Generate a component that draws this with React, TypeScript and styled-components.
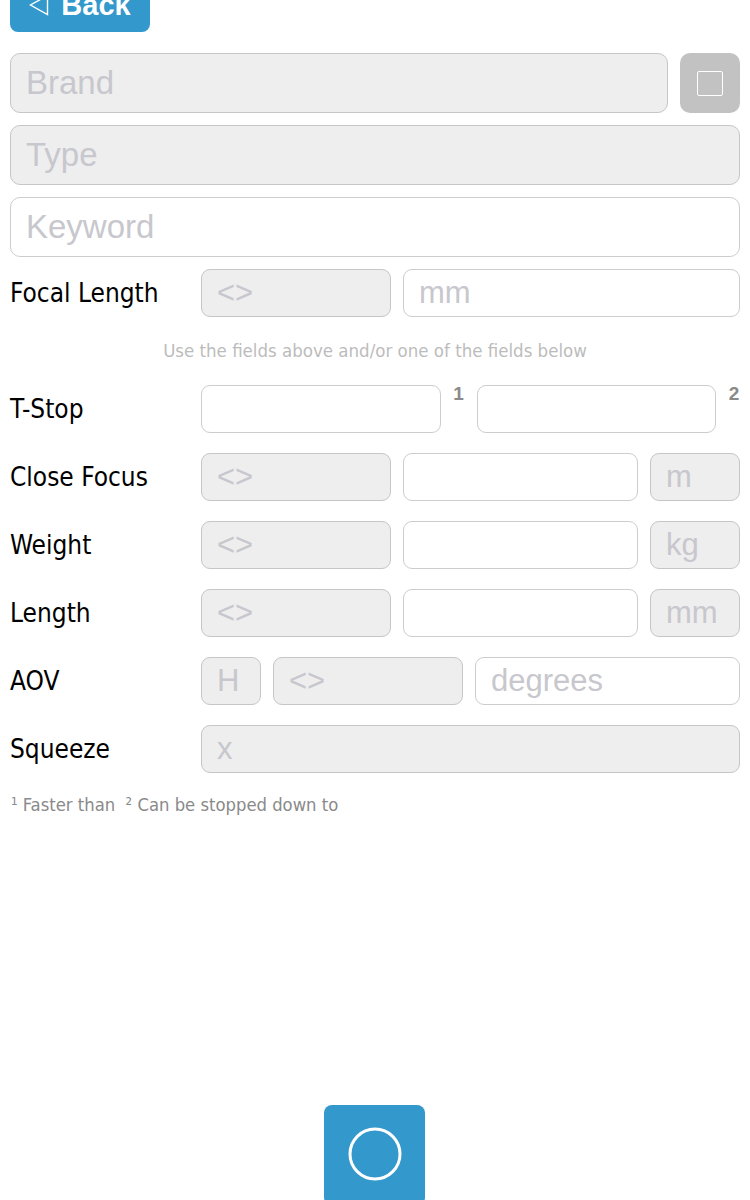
import React from "react";
import styled, { createGlobalStyle } from "styled-components";

const Global = createGlobalStyle`
  html, body { margin: 0; padding: 0; background: #ffffff; overflow: hidden; }
  body { font-family: "Liberation Sans", Arial, sans-serif; }
  * { box-sizing: border-box; }
`;

const condensed = `"Liberation Sans Narrow", "DejaVu Sans Condensed", "Roboto Condensed", sans-serif`;

const Page = styled.div`
  width: 750px;
  padding: 0 10px;
  display: flex;
  flex-direction: column;
`;

const BackButton = styled.button`
  margin-top: -22px;
  width: 140px;
  height: 54px;
  border: none;
  border-radius: 8px;
  background: #3399cc;
  color: #ffffff;
  font-family: "Liberation Sans", Arial, sans-serif;
  font-weight: bold;
  font-size: 29px;
  display: flex;
  align-items: center;
  justify-content: center;
  gap: 12px;
  padding: 0;
`;

const Stack = styled.div`
  margin-top: 21px;
  display: flex;
  flex-direction: column;
  gap: 12px;
`;

const TopRow = styled.div`
  display: flex;
  gap: 12px;
`;

const Field = styled.input<{ $gray?: boolean; $h?: number; $w?: number; $r?: number }>`
  height: ${(p) => p.$h ?? 48}px;
  ${(p) => (p.$w ? `width: ${p.$w}px; flex: none;` : `width: 0; flex: 1 1 0; min-width: 0;`)}
  border: 1px solid ${(p) => (p.$gray ? "#c6c6c6" : "#cdcdcd")};
  border-radius: ${(p) => p.$r ?? 9}px;
  background: ${(p) => (p.$gray ? "#eeeeee" : "#ffffff")};
  padding: 0 0 0 15px;
  font-family: "Liberation Sans", Arial, sans-serif;
  font-size: ${(p) => ((p.$h ?? 48) > 50 ? 33 : 31)}px;
  color: #333;
  outline: none;
  &::placeholder {
    color: #c7c7cd;
  }
`;

const SquareButton = styled.div`
  width: 60px;
  height: 60px;
  flex: none;
  border-radius: 10px;
  background: #c2c2c2;
  display: flex;
  align-items: center;
  justify-content: center;
`;

const SquareIcon = styled.div`
  width: 26px;
  height: 25px;
  border: 1.5px solid #ffffff;
  border-radius: 2px;
`;

const Form = styled.div`
  margin-top: 12px;
  display: flex;
  flex-direction: column;
`;

const Row = styled.div<{ $mt?: number }>`
  display: grid;
  grid-template-columns: 191px minmax(0, 1fr);
  align-items: center;
  margin-top: ${(p) => p.$mt ?? 20}px;
`;

const Label = styled.div`
  font-family: ${condensed};
  font-size: 26px;
  color: #000;
  line-height: 48px;
  white-space: nowrap;
`;

const Fields = styled.div`
  display: flex;
  gap: 12px;
  align-items: center;
  min-width: 0;
`;

const Sup = styled.span`
  width: 12px;
  flex: none;
  align-self: flex-start;
  font-family: "Liberation Sans", Arial, sans-serif;
  font-weight: bold;
  font-size: 19px;
  line-height: 20px;
  margin-top: -1px;
  color: #8a8a8a;
  text-align: center;
`;

const Hint = styled.div`
  margin-top: 22px;
  text-align: center;
  font-family: ${condensed};
  font-size: 18.5px;
  color: #bcbcbc;
  line-height: 24px;
`;

const Footnote = styled.div`
  margin-top: 20px;
  padding-left: 1px;
  font-family: ${condensed};
  font-size: 18.3px;
  color: #8a8a8a;
  line-height: 24px;
  white-space: pre;
`;

const BottomBar = styled.div`
  margin-top: 288px;
  display: flex;
  justify-content: center;
`;

const RoundAction = styled.button`
  margin-left: -1px;
  width: 101px;
  height: 101px;
  border: none;
  border-radius: 8px;
  background: #3399cc;
  display: flex;
  align-items: flex-start;
  justify-content: center;
  padding: 21px 0 0 0;
`;

const Triangle = () => (
  <svg width="20" height="22" viewBox="0 0 20 22">
    <path d="M18.5 1.5 L18.5 20.5 L1.5 11 Z" fill="none" stroke="#ffffff" strokeWidth="1.4" strokeLinejoin="miter" />
  </svg>
);

export default function App() {
  return (
    <>
      <Global />
      <Page>
        <BackButton>
          <Triangle />
          <span>Back</span>
        </BackButton>
        <Stack>
          <TopRow>
            <Field $gray $h={60} $r={10} placeholder="Brand" readOnly />
            <SquareButton>
              <SquareIcon />
            </SquareButton>
          </TopRow>
          <TopRow>
            <Field $gray $h={60} $r={10} placeholder="Type" readOnly />
          </TopRow>
          <TopRow>
            <Field $h={60} $r={10} placeholder="Keyword" readOnly />
          </TopRow>
        </Stack>
        <Form>
          <Row $mt={0}>
            <Label>Focal Length</Label>
            <Fields>
              <Field $gray $w={190} placeholder="<>" readOnly />
              <Field placeholder="mm" readOnly />
            </Fields>
          </Row>
          <Hint>Use the fields above and/or one of the fields below</Hint>
          <Row $mt={22}>
            <Label>T-Stop</Label>
            <Fields>
              <Field readOnly />
              <Sup>1</Sup>
              <Field readOnly />
              <Sup>2</Sup>
            </Fields>
          </Row>
          <Row>
            <Label>Close Focus</Label>
            <Fields>
              <Field $gray $w={190} placeholder="<>" readOnly />
              <Field readOnly />
              <Field $gray $w={90} placeholder="m" readOnly />
            </Fields>
          </Row>
          <Row>
            <Label>Weight</Label>
            <Fields>
              <Field $gray $w={190} placeholder="<>" readOnly />
              <Field readOnly />
              <Field $gray $w={90} placeholder="kg" readOnly />
            </Fields>
          </Row>
          <Row>
            <Label>Length</Label>
            <Fields>
              <Field $gray $w={190} placeholder="<>" readOnly />
              <Field readOnly />
              <Field $gray $w={90} placeholder="mm" readOnly />
            </Fields>
          </Row>
          <Row>
            <Label>AOV</Label>
            <Fields>
              <Field $gray $w={60} placeholder="H" readOnly />
              <Field $gray $w={190} placeholder="<>" readOnly />
              <Field placeholder="degrees" readOnly />
            </Fields>
          </Row>
          <Row>
            <Label>Squeeze</Label>
            <Fields>
              <Field $gray placeholder="x" readOnly />
            </Fields>
          </Row>
          <Footnote>{"¹ Faster than  ² Can be stopped down to"}</Footnote>
        </Form>
        <BottomBar>
          <RoundAction>
            <svg width="56" height="56" viewBox="0 0 56 56">
              <circle cx="28" cy="28" r="25" fill="none" stroke="#ffffff" strokeWidth="3" />
            </svg>
          </RoundAction>
        </BottomBar>
      </Page>
    </>
  );
}
